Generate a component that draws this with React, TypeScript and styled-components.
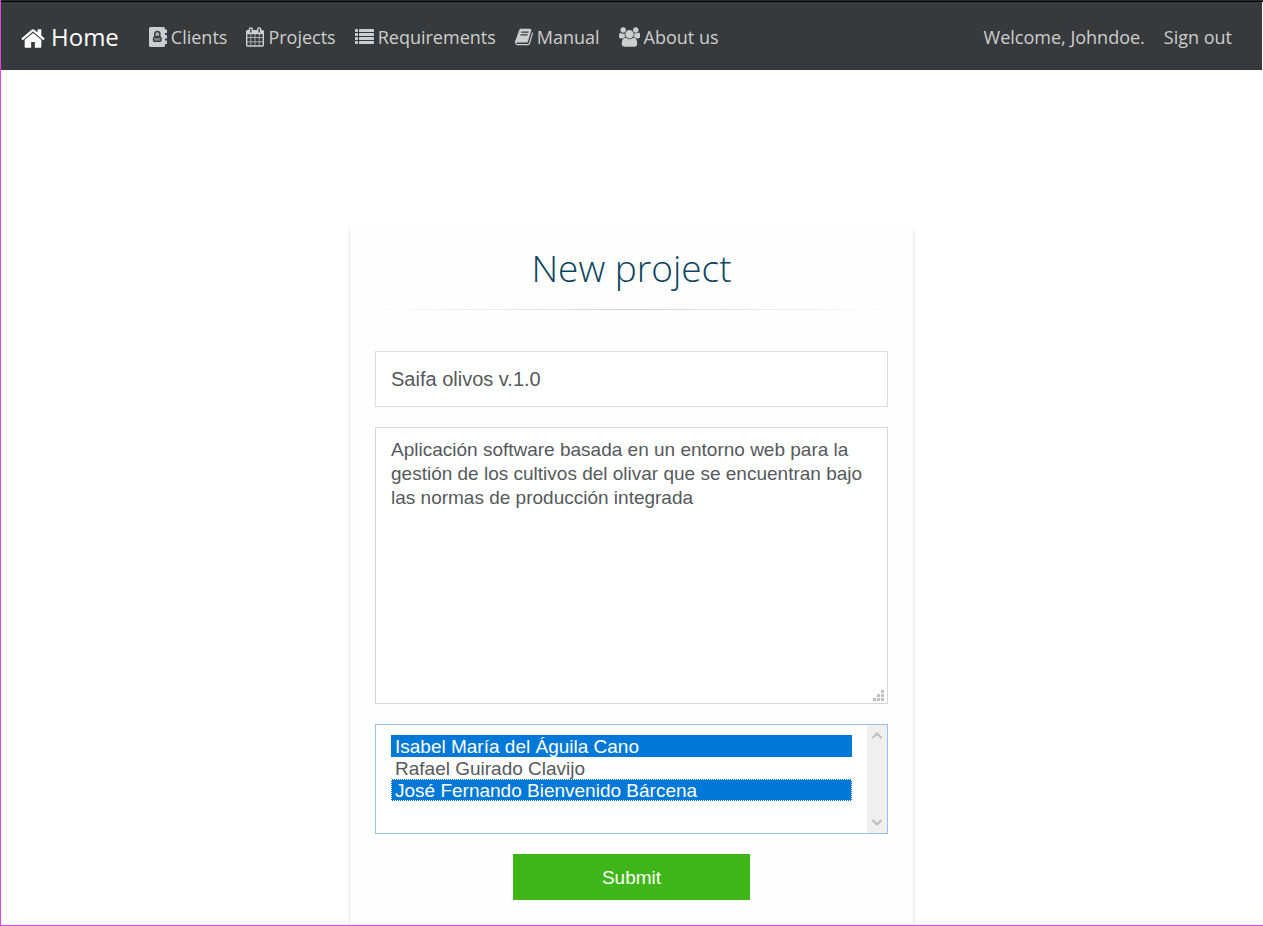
import React from 'react';
import styled, { createGlobalStyle } from 'styled-components';

const uiFont = "'Segoe UI', 'Open Sans', 'Noto Sans', sans-serif";
const formFont = "'Liberation Sans', Arial, sans-serif";

const GlobalStyle = createGlobalStyle`
  *, *::before, *::after { box-sizing: border-box; }
  body { margin: 0; background: #fff; font-family: ${uiFont}; }
`;

const Page = styled.div`
  min-height: 100vh;
  display: flex;
  flex-direction: column;
  border-left: 1px solid #dc46dc;
  border-bottom: 1px solid #dc46dc;
`;

const TopEdge = styled.div`
  height: 2px;
  background: #2b2d2f;
  border-bottom: 1px solid #000;
`;

const Navbar = styled.nav`
  display: flex;
  align-items: center;
  justify-content: space-between;
  height: 68px;
  margin-right: 1px;
  padding: 2px 30px 0 20px;
  background: #373a3c;
`;

const NavGroup = styled.div`
  display: flex;
  align-items: center;
  gap: 19px;
`;

const NavLink = styled.a`
  display: flex;
  align-items: center;
  gap: 4px;
  color: #cdcece;
  font-size: 18px;
  line-height: 30px;
  text-decoration: none;
  white-space: nowrap;
`;

const Brand = styled(NavLink)`
  gap: 6px;
  margin-right: 11px;
  color: #fff;
  font-size: 24px;
`;

const Welcome = styled.span`
  color: #cdcece;
  font-size: 18px;
  line-height: 30px;
  white-space: nowrap;
`;

const Icon = styled.svg`
  flex: none;
  display: block;
  fill: currentColor;
`;

const Main = styled.main`
  flex: 1;
  display: flex;
  justify-content: center;
  padding: 157px 1px 0 0;
  overflow: hidden;
`;

const Card = styled.form`
  width: 100%;
  max-width: 563px;
  padding: 12px 25px 25px;
  display: flex;
  flex-direction: column;
  background: #fefefe;
  box-shadow: 0 2px 3px rgba(0, 0, 0, 0.2);
`;

const Title = styled.h1`
  margin: 0;
  color: #0c4460;
  font-size: 37px;
  font-weight: 300;
  line-height: 58px;
  text-align: center;
`;

const Divider = styled.hr`
  width: 100%;
  height: 1px;
  margin: 12px 0 41px;
  border: 0;
  background: linear-gradient(to right, transparent, #d2d2d2, transparent);
`;

const NameInput = styled.input`
  width: 100%;
  height: 56px;
  padding: 0 15px;
  border: 1px solid #dcdcdc;
  border-radius: 0;
  outline: 0;
  background: #fff;
  color: #55595c;
  font: 20px ${formFont};
`;

const TextareaFrame = styled.div`
  position: relative;
  margin: 20px 0;
`;

const Description = styled.textarea`
  display: block;
  width: 100%;
  height: 277px;
  padding: 10px 15px;
  border: 1px solid #d6d6d6;
  border-radius: 0;
  outline: 0;
  resize: none;
  background: #fff;
  color: #55595c;
  font: 19px/24px ${formFont};
`;

const Grip = styled.svg`
  position: absolute;
  right: 4px;
  bottom: 3px;
  fill: #bfbfbf;
`;

const ListFrame = styled.div`
  display: flex;
  height: 110px;
  border: 1px solid #99c0ea;
  background: #fff;
`;

const ClientList = styled.select`
  flex: 1;
  min-width: 0;
  height: 108px;
  padding: 10px 15px;
  border: 0;
  border-radius: 0;
  outline: 0;
  overflow: hidden;
  background: transparent;
  color: #55595c;
  font: 19px/22px ${formFont};
`;

const ClientOption = styled.option<{ $current?: boolean }>`
  height: 22px;
  min-height: 22px;
  padding: 1px 4px 0;
  line-height: 21px;
  outline: ${(p) => (p.$current ? '1px dotted #fff' : '0')};
  outline-offset: -1px;

  &:checked {
    background: #0078d7 linear-gradient(#0078d7, #0078d7);
    color: #fff;
  }
`;

const ScrollTrack = styled.div`
  display: flex;
  flex-direction: column;
  justify-content: space-between;
  align-items: center;
  width: 20px;
  padding: 7px 1px 7px 0;
  background: #efefef;
`;

const Chevron = styled.svg`
  fill: none;
  stroke: #bcbcbc;
  stroke-width: 2;
`;

const SubmitButton = styled.button`
  align-self: center;
  width: 237px;
  height: 46px;
  margin-top: 20px;
  padding: 2px 0 0;
  border: 0;
  background: #3fb618;
  color: #fff;
  font: 19px ${formFont};
`;

const HomeIcon = () => (
  <Icon width="24" height="25" viewBox="64 0 1664 1664" aria-hidden="true">
    <path d="M1472 992v480q0 26-19 45t-45 19h-384v-384h-256v384h-384q-26 0-45-19t-19-45v-480q0-1 .5-3t.5-3l575-474 575 474q1 2 1 6zm223-69l-62 74q-8 9-21 11h-3q-13 0-21-7l-692-577-692 577q-12 8-24 7-13-2-21-11l-62-74q-8-10-7-23.5t11-21.5l719-599q32-26 76-26t76 26l244 204v-195q0-14 9-23t23-9h192q14 0 23 9t9 23v408l219 182q10 8 11 21.5t-7 23.5z" />
  </Icon>
);

const AddressBookIcon = () => (
  <Icon width="18" height="20" viewBox="0 0 18 20" aria-hidden="true">
    <rect x="0" y="0" width="16" height="20" rx="1.600" />
    <rect x="15" y="2.500" width="3" height="3.500" rx="0.500" />
    <rect x="15" y="8" width="3" height="3.500" rx="0.500" />
    <rect x="15" y="13.500" width="3" height="3.500" rx="0.500" />
    <path
      d="M6 9.700Q4.400 10 4.400 12.700Q4.400 14.300 5.600 14.300H11Q12.200 14.300 12.200 12.700Q12.200 10 10.600 9.700Q8.300 11.300 6 9.700Z"
      fill="#7d7f80"
      stroke="#373a3c"
      strokeWidth="1.200"
    />
    <circle cx="8.300" cy="7.200" r="2.700" fill="#a9abab" stroke="#373a3c" strokeWidth="1.300" />
  </Icon>
);

const CalendarIcon = () => (
  <Icon width="18" height="20" viewBox="64 0 1664 1792" aria-hidden="true">
    <path d="M192 1664h288v-288h-288v288zm352 0h320v-288h-320v288zm-352-352h288v-320h-288v320zm352 0h320v-320h-320v320zm-352-384h288v-288h-288v288zm736 736h320v-288h-320v288zm-384-736h320v-288h-320v288zm768 736h288v-288h-288v288zm-384-352h320v-320h-320v320zm-352-864v-288q0-13-9.500-22.500t-22.500-9.500h-64q-13 0-22.500 9.500t-9.500 22.500v288q0 13 9.500 22.500t22.500 9.500h64q13 0 22.500-9.500t9.500-22.500zm736 864h288v-320h-288v320zm-384-384h320v-288h-320v288zm384 0h288v-288h-288v288zm32-480v-288q0-13-9.500-22.500t-22.500-9.500h-64q-13 0-22.500 9.500t-9.500 22.500v288q0 13 9.500 22.500t22.500 9.500h64q13 0 22.500-9.500t9.500-22.500zm384-64v1280q0 52-38 90t-90 38h-1408q-52 0-90-38t-38-90v-1280q0-52 38-90t90-38h128v-96q0-66 47-113t113-47h64q66 0 113 47t47 113v96h384v-96q0-66 47-113t113-47h64q66 0 113 47t47 113v96h128q52 0 90 38t38 90z" />
  </Icon>
);

const ListIcon = () => (
  <Icon width="19" height="20" viewBox="0 0 19 20" aria-hidden="true">
    {[2, 6, 10, 14].map((y) => (
      <React.Fragment key={y}>
        <rect x="0" y={y} width="3" height="3" rx="0.4" />
        <rect x="4" y={y} width="15" height="3" rx="0.4" />
      </React.Fragment>
    ))}
  </Icon>
);

const BookIcon = () => (
  <Icon width="18" height="20" viewBox="64 0 1664 1792" aria-hidden="true">
    <path d="M1703 478q40 57 18 129l-275 906q-19 64-76.500 107.500t-122.500 43.500h-923q-77 0-148.500-53.500t-99.500-131.500q-24-67-2-127 0-4 3-27t4-37q1-8-3-21.500t-3-19.500q2-11 8-21t16.500-23.500 16.500-23.500q23-38 45-91.500t30-91.500q3-10 .5-30t-.5-28q3-11 17-28t17-23q21-36 42-92t25-90q1-9-2.500-32t.5-28q4-13 22-30.500t22-22.500q19-26 42.500-84.500t27.500-96.500q1-8-3-25.500t-2-26.500q2-8 9-18t18-23 17-21q8-12 16.500-30.500t15-35 16-36 19.500-32 26.500-23.500 36-11.500 47.500 5.500l-1 3q38-9 51-9h761q74 0 114 56t18 130l-274 906q-36 119-71.500 153.500t-128.500 34.500h-869q-27 0-38 15-11 16-1 43 24 70 144 70h923q29 0 56-15.500t35-41.500l300-987q7-22 5-57 38 15 59 43zm-1064 2q-4 13 2 22.500t20 9.500h608q13 0 25.500-9.500t16.500-22.500l21-64q4-13-2-22.500t-20-9.500h-608q-13 0-25.500 9.500t-16.500 22.500zm-83 256q-4 13 2 22.500t20 9.500h608q13 0 25.500-9.500t16.500-22.500l21-64q4-13-2-22.500t-20-9.500h-608q-13 0-25.500 9.500t-16.500 22.500z" />
  </Icon>
);

const UsersIcon = () => (
  <Icon width="21" height="20" viewBox="64 0 1920 1792" aria-hidden="true">
    <path d="M657 896q-162 5-265 128h-134q-82 0-138-40.500t-56-118.500q0-353 124-353 6 0 43.500 21t97.500 42.500 119 21.500q67 0 133-23-5 37-5 66 0 159 93 293zm1071 637q0 120-73 189.500t-194 69.500h-874q-121 0-194-69.500t-73-189.500q0-53 3.500-103.500t14-109 26.500-108.500 43-97.500 62-81 85.500-53.500 111.500-20q10 0 43 21.500t73 48 107 48 135 21.500 135-21.500 107-48 73-48 43-21.500q61 0 111.500 20t85.500 53.500 62 81 43 97.500 26.500 108.500 14 109 3.500 103.500zm-1024-1277q0 106-75 181t-181 75-181-75-75-181 75-181 181-75 181 75 75 181zm704 384q0 159-112.500 271.500t-271.500 112.500-271.500-112.500-112.500-271.500 112.500-271.500 271.500-112.500 271.500 112.500 112.500 271.500zm576 225q0 78-56 118.500t-138 40.500h-134q-103-123-265-128 93-134 93-293 0-29-5-66 66 23 133 23 59 0 119-21.500t97.500-42.500 43.500-21q124 0 124 353zm-128-609q0 106-75 181t-181 75-181-75-75-181 75-181 181-75 181 75 75 181z" />
  </Icon>
);

const links = [
  { label: 'Clients', Glyph: AddressBookIcon },
  { label: 'Projects', Glyph: CalendarIcon },
  { label: 'Requirements', Glyph: ListIcon },
  { label: 'Manual', Glyph: BookIcon },
  { label: 'About us', Glyph: UsersIcon },
];

const gripDots = [[8, 0], [4, 4], [8, 4], [0, 8], [4, 8], [8, 8]];

export default function App() {
  return (
    <>
      <GlobalStyle />
      <Page>
        <TopEdge />
        <Navbar>
          <NavGroup>
            <Brand href="#">
              <HomeIcon />
              Home
            </Brand>
            {links.map(({ label, Glyph }) => (
              <NavLink href="#" key={label}>
                <Glyph />
                {label}
              </NavLink>
            ))}
          </NavGroup>
          <NavGroup>
            <Welcome>Welcome, Johndoe.</Welcome>
            <NavLink href="#">Sign out</NavLink>
          </NavGroup>
        </Navbar>
        <Main>
          <Card onSubmit={(e) => e.preventDefault()}>
            <Title>New project</Title>
            <Divider />
            <NameInput type="text" aria-label="Project name" defaultValue="Saifa olivos v.1.0" />
            <TextareaFrame>
              <Description
                aria-label="Description"
                spellCheck={false}
                defaultValue="Aplicación software basada en un entorno web para la gestión de los cultivos del olivar que se encuentran bajo las normas de producción integrada"
              />
              <Grip width="11" height="11" viewBox="0 0 11 11" aria-hidden="true">
                {gripDots.map(([x, y]) => (
                  <rect key={`${x}-${y}`} x={x} y={y} width="3" height="3" />
                ))}
              </Grip>
            </TextareaFrame>
            <ListFrame>
              <ClientList multiple size={4} aria-label="Clients" defaultValue={['isabel', 'jose']}>
                <ClientOption value="isabel">Isabel María del Águila Cano</ClientOption>
                <ClientOption value="rafael">Rafael Guirado Clavijo</ClientOption>
                <ClientOption value="jose" $current>
                  José Fernando Bienvenido Bárcena
                </ClientOption>
              </ClientList>
              <ScrollTrack aria-hidden="true">
                <Chevron width="10" height="7" viewBox="0 0 10 7">
                  <path d="M0.500 6L5 1.500L9.500 6" />
                </Chevron>
                <Chevron width="10" height="7" viewBox="0 0 10 7">
                  <path d="M0.500 1L5 5.500L9.500 1" />
                </Chevron>
              </ScrollTrack>
            </ListFrame>
            <SubmitButton type="submit">Submit</SubmitButton>
          </Card>
        </Main>
      </Page>
    </>
  );
}
